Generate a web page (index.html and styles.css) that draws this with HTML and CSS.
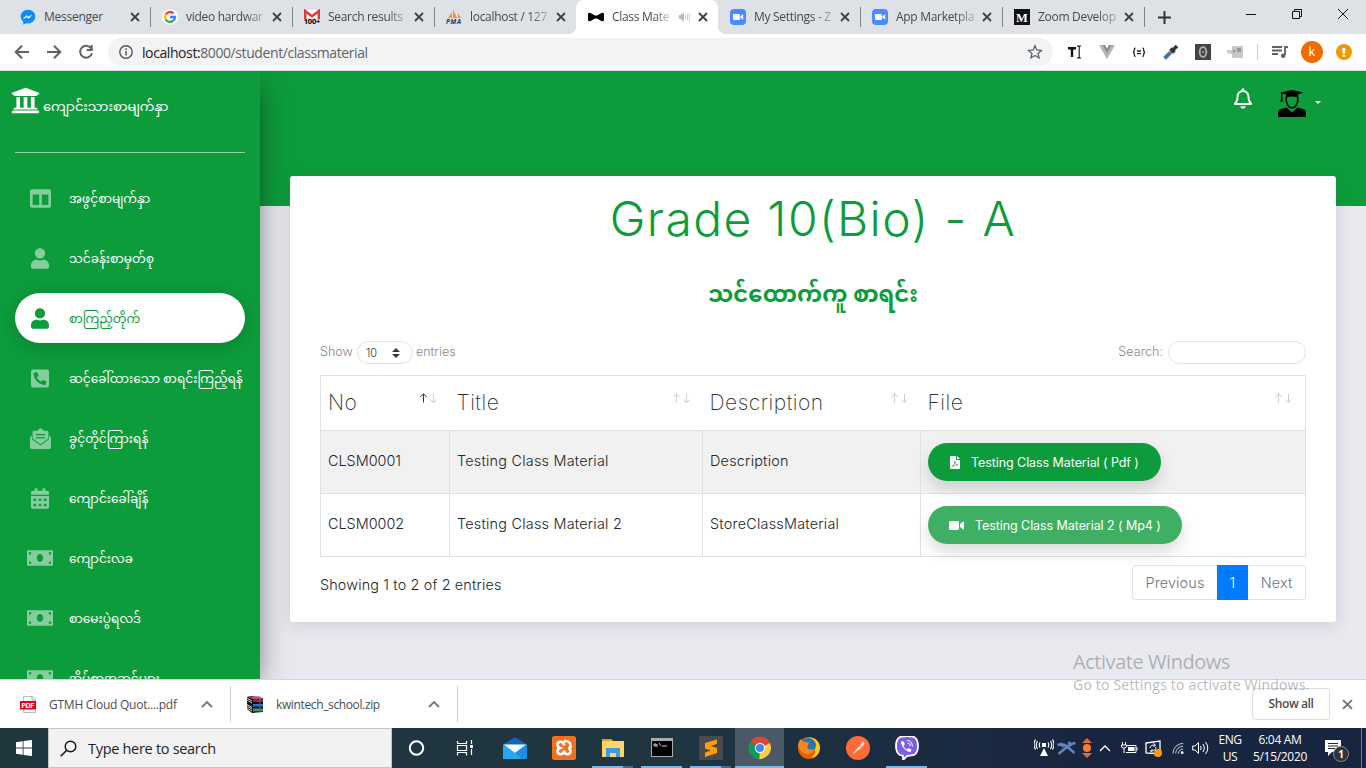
FILE: index.html
```html
<!DOCTYPE html>
<html lang="my">
<head>
<meta charset="utf-8">
<title>Class Material</title>
<link rel="stylesheet" href="styles.css">
</head>
<body>
<svg class="defs" width="0" height="0">
  <symbol id="close" viewBox="0 0 10 10"><path d="M1 1l8 8M9 1l-8 8" stroke="currentColor" stroke-width="1.8"/></symbol>
  <symbol id="user" viewBox="0 0 448 512"><path d="M224 256c70.7 0 128-57.3 128-128S294.7 0 224 0 96 57.3 96 128s57.3 128 128 128zm89.6 32h-16.7c-22.2 10.2-46.9 16-72.9 16s-50.6-5.8-72.9-16h-16.7C60.2 288 0 348.2 0 422.4V464c0 26.5 21.5 48 48 48h352c26.500 0 48-21.500 48-48v-41.600c0-74.200-60.200-134.400-134.400-134.400z"/></symbol>
  <symbol id="money" viewBox="0 0 640 384"><path fill-rule="evenodd" d="M32 0H608a32 32 0 0 1 32 32V352a32 32 0 0 1-32 32H32a32 32 0 0 1-32-32V32A32 32 0 0 1 32 0ZM320 96c-44 0-80 43-80 96s36 96 80 96 80-43 80-96-36-96-80-96ZM48 48v64c35 0 64-29 64-64ZM592 48h-64c0 35 29 64 64 64ZM48 272v64h64c0-35-29-64-64-64ZM592 336v-64c-35 0-64 29-64 64Z"/></symbol>
  <symbol id="zoomcam" viewBox="0 0 16 16"><rect width="16" height="16" rx="4" fill="#4a8cff"/><path d="M3 5h5.500q1.300 0 1.300 1.300V11H4.300Q3 11 3 9.700zM10.400 7.200l2.800-2v5.600l-2.800-2z" fill="#fff"/></symbol>
  <symbol id="sort" viewBox="0 0 18 10"><path stroke="currentColor" d="M4 9.500V.8M.8 4L4 .8 7.200 4"/><path stroke="#ccc" d="M14 .8v8.700M10.800 6.500l3.200 3 3.200-3"/></symbol>
  <symbol id="chev" viewBox="0 0 12 8"><path d="M1 7l5-5 5 5" fill="none" stroke="currentColor" stroke-width="1.900"/></symbol>
</svg>

<header class="tabs">
  <div class="tab"><svg class="fav" viewBox="0 0 16 16"><path d="M8 .7C3.700.7.7 3.800.7 7.600c0 2.200 1 4.100 2.600 5.300v2.800l2.500-1.400c4.800 1.200 9.500-2 9.500-6.700C15.300 3.800 12.200.7 8 .7z" fill="#0a8cff"/><path d="M3.500 9.600l3-3.200L8.300 8l3.400-1.900-3.100 3.400L6.800 7.900z" fill="#fff" stroke="#fff" stroke-width=".5"/></svg><span class="label">Messenger</span><svg class="x"><use href="#close"/></svg></div>
  <div class="tab sep"><svg class="fav" viewBox="0 0 16 16"><circle cx="8" cy="8" r="8" fill="#fff"/><g fill="none" stroke-width="2.300"><path d="M3.700 5.500A5 5 0 0 1 11.600 4.500" stroke="#ea4335"/><path d="M3.700 5.500a5 5 0 0 0 0 5" stroke="#fbbc05"/><path d="M3.700 10.500a5 5 0 0 0 7.600 1.200" stroke="#34a853"/><path d="M11.300 11.700A5 5 0 0 0 13 8H8" stroke="#4285f4"/></g></svg><span class="label fade">video hardwar</span><svg class="x"><use href="#close"/></svg></div>
  <div class="tab sep"><svg class="fav" viewBox="0 0 16 16"><path d="M0 1h16v8H0z" fill="#fff"/><path d="M1.200 10V2L8 7.200 14.800 2v8" fill="none" stroke="#dc3b35" stroke-width="2.400"/><text x="-.2" y="15" font-size="7.500" font-weight="bold" textLength="16.500">100+</text></svg><span class="label fade">Search results</span><svg class="x"><use href="#close"/></svg></div>
  <div class="tab sep"><svg class="fav" viewBox="0 0 16 16"><path d="M2 9L6 3v6zM7 9V0l4 9zM12 9V4l3 5z" fill="#f7941e"/><text x="0" y="15" font-size="6.500" font-style="italic" font-weight="bold" fill="#303070" textLength="15">PMA</text></svg><span class="label fade">localhost / 127</span><svg class="x"><use href="#close"/></svg></div>
  <div class="tab active"><svg class="fav" viewBox="0 0 16 16"><path d="M0 4.500q1-1 2.500-.5L7 6.500h2L13.500 4Q15 3.500 16 4.500v7q-1 1-2.500.5L9 9.500H7L2.500 12Q1 12.500 0 11.500z"/></svg><span class="label fade">Class Mate</span><svg class="snd" viewBox="0 0 12 12"><path d="M1 4h2l3-3v10L3 8H1z" fill="#bbb"/><path d="M7.500 4v4M9.500 3v6M11.300 2v8" stroke="#ccc"/></svg><svg class="x"><use href="#close"/></svg></div>
  <div class="tab"><svg class="fav"><use href="#zoomcam"/></svg><span class="label fade">My Settings - Z</span><svg class="x"><use href="#close"/></svg></div>
  <div class="tab sep"><svg class="fav"><use href="#zoomcam"/></svg><span class="label fade">App Marketpla</span><svg class="x"><use href="#close"/></svg></div>
  <div class="tab sep"><svg class="fav" viewBox="0 0 16 16"><path d="M0 0h16v16H0z" fill="#111"/><text x="2" y="12.500" font-size="12.500" font-weight="bold" font-family="Liberation Serif" fill="#fff">M</text></svg><span class="label fade">Zoom Develop</span><svg class="x"><use href="#close"/></svg></div>
  <div class="newtab sep"><svg width="13" height="13" viewBox="0 0 13 13"><path d="M6.500 0v13M0 6.500h13" stroke="#333" stroke-width="2"/></svg></div>
  <div class="winbtns">
    <svg width="12" height="12" viewBox="0 0 12 12"><path d="M1 6.500h10"/></svg>
    <svg width="12" height="12" viewBox="0 0 12 12"><path d="M1.500 3.500h7v7h-7zM3.500 3.500v-2h7v7h-2"/></svg>
    <svg width="12" height="12" viewBox="0 0 12 12"><path d="M1 1l10 10M11 1L1 11"/></svg>
  </div>
</header>

<nav class="toolbar">
  <svg class="nav" viewBox="0 0 16 16"><path d="M15 8H2M8 1.700L1.700 8 8 14.300"/></svg>
  <svg class="nav" viewBox="0 0 16 16"><path d="M1 8h13M8 1.700L14.300 8 8 14.300"/></svg>
  <svg class="nav" viewBox="0 0 16 16"><path d="M13.200 4.400A6 6 0 1 0 14 9.200M13.700 1v5H8.700"/></svg>
  <div class="omnibox">
    <svg width="14" height="14" viewBox="0 0 14 14"><circle cx="7" cy="7" r="6.200" fill="none" stroke="#555" stroke-width="1.400"/><path d="M7 6v4.500M7 3.300v1.600" stroke="#555" stroke-width="1.500"/></svg>
    <span class="url"><b>localhost:</b>8000/student/classmaterial</span>
    <svg class="star" width="16" height="16" viewBox="0 0 16 16"><path d="M8 1.700l1.800 4.300 4.700.4-3.500 3 1.100 4.600L8 11.500 3.900 14 5 9.400l-3.500-3L6.200 6z" fill="none" stroke="#5f6368" stroke-width="1.300"/></svg>
  </div>
  <div class="exts">
    <svg viewBox="0 0 16 16"><path d="M1 4.200h8M5 4v9" stroke="#111" stroke-width="2.400"/><path d="M10 2h1.500l.7.700.7-.7H14M12.200 3v10M10 14h1.500l.7-.7.700.7H14" stroke="#111" fill="none" stroke-width="1.100"/></svg>
    <svg viewBox="0 0 16 16"><path d="M0 1h5l3 5 3-5h5L8 15z" fill="#b4b4b4"/><path d="M3.500 1H6l2 3.500L10 1h2.500L8 9z" fill="#888"/></svg>
    <svg viewBox="0 0 16 16"><path d="M4.500 4Q3.300 4 3.300 6T2 8.300Q3.300 8.500 3.300 10.500T4.500 12.500M11.500 4q1.200 0 1.200 2t1.300 2.300q-1.300.2-1.300 2.200t-1.200 2M6 7h4M6 9.700h4" fill="none" stroke="#222" stroke-width="1.300"/></svg>
    <svg viewBox="0 0 16 16"><path d="M1.500 14.500L9 7" stroke="#888" stroke-width="4"/><path d="M2 14l5-5" stroke="#3469e0" stroke-width="2.500"/><path d="M7.500 4.500l4 4M9.500 6.500l4.500-4.500" stroke="#333" stroke-width="3.500"/></svg>
    <svg viewBox="0 0 16 16"><path d="M0 0h16v16H0z" fill="#444"/><ellipse cx="8" cy="8" rx="3.300" ry="5" fill="none" stroke="#aaa" stroke-width="2"/><circle cx="8" cy="8" r="1" fill="#aaa"/></svg>
    <svg viewBox="0 0 16 16"><path d="M5 2h11v12H5v-4L0 9V6h5z" fill="#c8c8c8"/><path d="M6 5l3 2-3 2zM10 4h4v4h-4z" fill="#999"/></svg>
    <i class="bar"></i>
    <svg class="queue" viewBox="0 0 16 16"><path d="M0 3h10M0 6.500h10M0 10h6M16 3h-3v8" fill="none" stroke="#5f6368" stroke-width="1.800"/><circle cx="11.200" cy="11.700" r="2.300" fill="#5f6368"/></svg>
    <span class="avatar">k</span>
    <span class="alert">!</span>
  </div>
</nav>

<main class="page">
  <aside class="sidebar">
    <div class="brand"><svg viewBox="0 0 512 512"><path d="M496 128v16a8 8 0 0 1-8 8h-24v12c0 6.600-5.400 12-12 12H60c-6.600 0-12-5.400-12-12v-12H24a8 8 0 0 1-8-8v-16a8 8 0 0 1 4.900-7.400l232-88a8 8 0 0 1 6.100 0l232 88A8 8 0 0 1 496 128zm-24 304H40c-13.300 0-24 10.700-24 24v16a8 8 0 0 0 8 8h464a8 8 0 0 0 8-8v-16c0-13.300-10.700-24-24-24zM96 192v192H60c-6.600 0-12 5.400-12 12v20h416v-20c0-6.600-5.400-12-12-12h-36V192h-64v192h-64V192h-64v192h-64V192H96z"/></svg><span>ကျောင်းသားစာမျက်နှာ</span></div>
    <hr>
    <a class="item"><span class="ico"><svg width="21" height="21" viewBox="0 0 512 512"><path d="M464 32H48C21.500 32 0 53.500 0 80v352c0 26.500 21.500 48 48 48h416c26.500 0 48-21.500 48-48V80c0-26.500-21.500-48-48-48zM224 416H64V160h160v256zm224 0H288V160h160v256z"/></svg></span><span>အဖွင့်စာမျက်နှာ</span></a>
    <a class="item"><span class="ico"><svg width="18" height="21"><use href="#user"/></svg></span><span>သင်ခန်းစာမှတ်စု</span></a>
    <a class="item current"><span class="ico"><svg width="18" height="21"><use href="#user"/></svg></span><span>စာကြည့်တိုက်</span></a>
    <a class="item"><span class="ico"><svg width="18" height="21" viewBox="0 0 448 512"><path d="M400 32H48A48 48 0 0 0 0 80v352a48 48 0 0 0 48 48h352a48 48 0 0 0 48-48V80a48 48 0 0 0-48-48zm-16.390 307.370l-15 65A15 15 0 0 1 354 416C194 416 64 286.290 64 126a15.700 15.700 0 0 1 11.630-14.610l65-15A18.230 18.230 0 0 1 144 96a16.270 16.270 0 0 1 13.790 9.090l30 70A17.900 17.900 0 0 1 189 181a17 17 0 0 1-5.500 11.610l-37.890 31a231.910 231.910 0 0 0 110.780 110.780l31-37.890A17 17 0 0 1 299 291a17.850 17.850 0 0 1 5.910 1.210l70 30A16.250 16.250 0 0 1 384 336a17.410 17.410 0 0 1-.390 3.370z"/></svg></span><span>ဆင့်ခေါ်ထားသော စာရင်းကြည့်ရန်</span></a>
    <a class="item"><span class="ico"><svg width="21" height="21" viewBox="0 0 512 512"><path fill-rule="evenodd" d="M64 257V96a32 32 0 0 1 32-32h77l50-42q33-34 66 0l50 42h77a32 32 0 0 1 32 32v161L256 396ZM144 144v32h224v-32ZM144 224v32h224v-32ZM0 464V250q0-28 18-40l30-22v88l208 151 208-151v-88l30 22q18 12 18 40v214a48 48 0 0 1-48 48H48a48 48 0 0 1-48-48Z"/></svg></span><span>ခွင့်တိုင်ကြားရန်</span></a>
    <a class="item"><span class="ico"><svg width="18" height="21" viewBox="0 0 448 512"><path fill-rule="evenodd" d="M0 160v-48a48 48 0 0 1 48-48h48V12q0-12 12-12h40q12 0 12 12v52h128V12q0-12 12-12h40q12 0 12 12v52h48a48 48 0 0 1 48 48v48ZM0 192h448v272a48 48 0 0 1-48 48H48a48 48 0 0 1-48-48ZM64 256v64h64v-64ZM192 256v64h64v-64ZM320 256v64h64v-64ZM64 384v64h64v-64ZM192 384v64h64v-64ZM320 384v64h64v-64Z"/></svg></span><span>ကျောင်းခေါ်ချိန်</span></a>
    <a class="item"><span class="ico"><svg width="26" height="16"><use href="#money"/></svg></span><span>ကျောင်းလခ</span></a>
    <a class="item"><span class="ico"><svg width="26" height="16"><use href="#money"/></svg></span><span>စာမေးပွဲရလဒ်</span></a>
    <a class="item"><span class="ico"><svg width="26" height="16"><use href="#money"/></svg></span><span>အိမ်စာအဆင့်များ</span></a>
  </aside>
  <section class="content">
    <div class="topnav">
      <svg class="bell" viewBox="0 0 448 512"><path d="M439.390 362.290c-19.320-20.760-55.470-51.990-55.470-154.290 0-77.700-54.480-139.900-127.940-155.160V32c0-17.670-14.320-32-31.980-32s-31.980 14.330-31.980 32v20.840C118.560 68.100 64.080 130.300 64.080 208c0 102.300-36.150 133.530-55.470 154.290-6 6.450-8.660 14.160-8.610 21.710.110 16.400 12.980 32 32.100 32h383.800c19.120 0 32-15.600 32.100-32 .050-7.550-2.610-15.270-8.610-21.710zM67.530 368c21.220-27.970 44.420-74.330 44.530-159.420 0-.2-.060-.380-.060-.580 0-61.860 50.140-112 112-112s112 50.140 112 112c0 .2-.060.380-.060.580.110 85.100 23.310 131.460 44.530 159.420H67.530zM224 512c35.320 0 63.970-28.650 63.970-64H160.030c0 35.350 28.650 64 63.970 64z"/></svg>
      <svg class="student" viewBox="0 0 28 27"><path d="M2.500 2.500L14 0l11.500 2.500L20 4.500v3q-6-2-12 0v-3L4.500 3.600V9l.5 2.500H2L3 9V3z"/><path d="M8.300 6.500v5q1.700 6.500 5.700 6.500t5.700-6.500v-5" fill="none" stroke="#000" stroke-width="1.500"/><path d="M0 27v-4.500q0-3 3-3.500l5.500-1.500L14 22.500l5.500-5L25 19q3 .5 3 3.500V27z"/></svg>
      <i class="caret"></i>
    </div>
    <div class="card">
      <h1>Grade 10(Bio) - A</h1>
      <h2>သင်ထောက်ကူ စာရင်း</h2>
      <div class="controls">
        <span class="show">Show</span><span class="select">10<svg width="8" height="10" viewBox="0 0 8 10"><path d="M0 4l4-4 4 4zM0 6h8l-4 4z" fill="#343a40"/></svg></span><span class="entries">entries</span>
        <span class="search">Search:</span><input type="text" aria-label="Search">
      </div>
      <table>
        <colgroup><col class="c1"><col class="c2"><col class="c3"><col></colgroup>
        <thead><tr>
          <th><div><span>No</span><svg class="sort asc"><use href="#sort"/></svg></div></th>
          <th><div><span>Title</span><svg class="sort"><use href="#sort"/></svg></div></th>
          <th><div><span>Description</span><svg class="sort"><use href="#sort"/></svg></div></th>
          <th><div><span>File</span><svg class="sort"><use href="#sort"/></svg></div></th>
        </tr></thead>
        <tbody>
          <tr><td class="code">CLSM0001</td><td>Testing Class Material</td><td>Description</td><td class="file"><a class="btn pdf"><svg width="10" height="13" viewBox="0 0 10 13"><path d="M1 0h5v4h4v8q0 1-1 1H1q-1 0-1-1V1q0-1 1-1zM7 0l3 3H7z" fill="#fff"/><path d="M2 10.500q3-2 2.700-5.500Q5 8.500 8 9q-3-.4-6 1.500z" fill="none" stroke="#0d9c3b" stroke-width=".6"/></svg><span>Testing Class Material ( Pdf )</span></a></td></tr>
          <tr><td class="code">CLSM0002</td><td>Testing Class Material 2</td><td>StoreClassMaterial</td><td class="file"><a class="btn mp4"><svg width="15" height="11" viewBox="0 0 15 11"><path d="M1.500 1h7Q10 1 10 2.500v6Q10 10 8.500 10h-7Q0 10 0 8.500v-6Q0 1 1.500 1zM11 4l3-2.300q1-.4 1 .5v6.600q0 .9-1 .5L11 7z" fill="#fff"/></svg><span>Testing Class Material 2 ( Mp4 )</span></a></td></tr>
        </tbody>
      </table>
      <div class="foot">
        <span class="info">Showing 1 to 2 of 2 entries</span>
        <div class="pager"><a class="prev">Previous</a><a class="on">1</a><a class="next">Next</a></div>
      </div>
    </div>
  </section>
</main>

<section class="downloads">
  <div class="dl"><svg width="18" height="17" viewBox="0 0 18 17"><path d="M3.500.5h9l3 3v13h-12z" fill="#fff" stroke="#bbb"/><path d="M12 .5V4h4" fill="none" stroke="#aaa"/><rect y="5" width="16" height="8.500" fill="#e2001a"/><text x="1.300" y="12" font-size="7.500" font-weight="bold" fill="#fff" textLength="13">PDF</text></svg><span>GTMH Cloud Quot....pdf</span><svg class="up"><use href="#chev"/></svg></div>
  <div class="dl"><svg width="18" height="17" viewBox="0 0 18 17"><path d="M0 1l4-1 12 2v14l-11 1-5-4z" fill="#111"/><path d="M1 .8l11-.5 4 2.700-10 .3z" fill="#c04a90"/><path d="M6 3.500h10v2.300H6z" fill="#9a2468"/><path d="M6 8h10v2.500H6z" fill="#2c6ed4"/><path d="M6 12.500h10v2.800H6z" fill="#2ba375"/><path d="M0 4l5 3M0 8.500l5 3M0 12l5 3M0 2l5 3M0 10l5 3" stroke="#fff" stroke-width=".8"/><path d="M12 2h2v14h-2z" fill="#8b721d" opacity=".4"/></svg><span class="zip">kwintech_school.zip</span><svg class="up"><use href="#chev"/></svg></div>
  <div class="dlright"><span class="showall">Show all</span><svg class="x big"><use href="#close"/></svg></div>
</section>

<footer class="taskbar">
  <div class="start"><svg width="16" height="16" viewBox="0 0 16 16"><path d="M0 2.200L6.700 1.200v6.400H0zM7.500 1.100L16 0v7.600H7.500zM0 8.400h6.700v6.400L0 13.800zM7.500 8.400H16V16l-8.500-1.100z" fill="#fff"/></svg></div>
  <div class="tsearch"><svg width="17" height="17" viewBox="0 0 17 17"><circle cx="10.500" cy="6.500" r="5.300" fill="none" stroke="#111" stroke-width="1.400"/><path d="M6.700 10.300L.7 16.300" stroke="#111" stroke-width="1.500"/></svg><span>Type here to search</span></div>
  <div class="app"><svg viewBox="0 0 24 24"><circle cx="11.500" cy="12" r="6.700" fill="none" stroke="#fff" stroke-width="2"/></svg></div>
  <div class="app"><svg viewBox="0 0 24 24"><path d="M3.500 5v2.500h9V5M3.500 19.500v-3h9v3M3.500 9.500h9v5h-9zM17.500 4v4M17.500 13v6" fill="none" stroke="#fff" stroke-width="1.200"/><path d="M16 9h3v3h-3z" fill="#fff"/></svg></div>
  <div class="app"><svg viewBox="0 0 24 24"><path d="M0 8.500L12 1l12 7.500z" fill="#0f66ba"/><path d="M0 8.500h24V23H0z" fill="#28a8ea"/><path d="M1 8.500h22L12 17z" fill="#f4f8fb"/><path d="M12 17l12-8.500V23H19z" fill="#1e8fe0"/></svg></div>
  <div class="app"><svg viewBox="0 0 24 24"><rect width="24" height="24" rx="2.500" fill="#f27022"/><path d="M12 9.500C12 5 5.500 4.500 5.500 8.500Q5.500 11 8 12 5.500 13 5.500 15.500C5.500 19.500 12 19 12 14.500 12 19 18.500 19.500 18.500 15.500 18.500 13 16 12 18.500 11 18.500 8.500 18.500 4.500 12 5 12 9.500Z" fill="none" stroke="#fff" stroke-width="2.600"/></svg></div>
  <div class="app run tail"><svg viewBox="0 0 24 24"><path d="M1 3h9l2 2h11v16H1z" fill="#ffd667"/><path d="M1 3h9l2 2H1z" fill="#dda01c"/><path d="M5 21v-9h14v9h-4v-4H9v4z" fill="#3c9be5"/></svg></div>
  <div class="app run"><svg viewBox="0 0 24 24"><path d="M1 2h22v19H1z" fill="#aaa"/><path d="M2 5h20v15H2z" fill="#000"/><path d="M4 8h2v2H4zM7 8v3M9 7l2 3M12 10h5" stroke="#ddd" fill="none" stroke-width=".9"/></svg></div>
  <div class="app run tail"><svg viewBox="0 0 24 24"><rect width="24" height="24" rx="2" fill="#4a4a4a"/><path d="M6 7l12-3.500v4.300L12 10l6 2v5l-12 4v-4.500l6-2-6-2z" fill="#ff9c10"/></svg></div>
  <div class="app chrome"><svg viewBox="0 0 24 24"><path d="M12 12L2.200 6.300A11.200 11.200 0 0 1 22 7z" fill="#db4437"/><path d="M12 12l-.7 11.200A11.200 11.200 0 0 1 2.200 6.300z" fill="#0f9d58"/><path d="M12 12L22 7q3 8-3 13-4 3.200-7.700 3.200z" fill="#ffcd40"/><circle cx="12" cy="12" r="5.200" fill="#f1f1f1"/><circle cx="12" cy="12" r="4" fill="#4285f4"/></svg></div>
  <div class="app"><svg viewBox="0 0 24 24"><circle cx="12" cy="12" r="11" fill="#e66000"/><path d="M8 3q5-3 10 0 5 3 5 9-1 8-8 10 5-6 2-12-3-5-9-7z" fill="#ffcb1f"/><circle cx="11.500" cy="9.500" r="7.500" fill="#2c73b6"/><path d="M1 9Q2 4 4 3q1 3 5 3l3 1-2 4q2 4 8 2-3 6-9 5T1 9z" fill="#f2881e"/></svg></div>
  <div class="app"><svg viewBox="0 0 24 24"><circle cx="12" cy="12" r="12" fill="#ff6c37"/><path d="M5 19l8-9 4 1-8 6zM13 10l4-5 2 2-2 4" fill="#fbe1d6" stroke="#e25a2a" stroke-width=".5"/></svg></div>
  <div class="app run viber"><svg viewBox="0 0 24 24"><path d="M5 1q7-2 14 0 4 2 4 9t-4 9l-7 1-4 4v-4l-3-1q-4-2-4-9t4-9z" fill="#7d5fe6" stroke="#fff" stroke-width="1.800"/><path d="M7 5l2.200 1 .5 2.700-1.300 1.100q1 2.600 3.700 3.800L13.600 12l3 1.700-1 2q-1.700.8-5.200-2T6 7q-.3-1.500 1-2z" fill="#fff"/><path d="M12 4.500q5 0 5.500 6M12.500 7q2.500 0 3 3" fill="none" stroke="#fff"/></svg></div>
  <div class="tray">
    <svg class="t1" viewBox="0 0 20 18"><path d="M6 17l4-8 4 8zM8 4h4v4H8z" fill="#fff"/><path d="M6 3.500q-1.500 2.500 0 5M3.500 2q-2.500 4 0 8M1.500.5q-3 5 0 10M14 3.500q1.500 2.500 0 5M16.500 2q2.500 4 0 8M18.500.5q3 5 0 10" fill="none" stroke="#fff" stroke-width="1.200"/></svg>
    <svg class="t2" viewBox="0 0 20 16"><path d="M1 5q6-2 10 2l7 6M19 3l-5 1-12 10M12 2l3 4M4 3l3 4" stroke="#6482bf" stroke-width="2.600" fill="none"/></svg>
    <svg class="t3" viewBox="0 0 10 20"><path d="M0 5l5-5 5 5zM0 15h10l-5 5z" fill="#e96a2c"/><circle cx="5" cy="10" r="4" fill="#f47a35"/></svg>
    <svg class="t4" viewBox="0 0 12 8"><path d="M1 7l5-5 5 5" fill="none" stroke="#fff" stroke-width="1.300"/></svg>
    <svg class="t5" viewBox="0 0 17 12"><path d="M6 3.500h9v7H5M16 5.500v3M1.500 0v3M4.500 0v3M.5 3h5v2q-2.500 2.500-5 0zM3 6v5" fill="none" stroke="#fff" stroke-width="1"/><path d="M7 5h6.500v4H7z" fill="#fff"/></svg>
    <svg class="t6" viewBox="0 0 17 17"><path d="M1 3l14-2v13L1 13z" fill="none" stroke="#fff" stroke-width="1.300"/><path d="M5 8q0-3 5-3M8.500 3.500L10.500 5l-2 2M11 7q0 4-5 4M7.500 9.500L5.500 11l2 1.500" fill="none" stroke="#fff"/><circle cx="13" cy="13" r="4" fill="#ff990f"/></svg>
    <svg class="t7" viewBox="0 0 13 13"><g fill="none" stroke="#ddd" stroke-width="1"><path d="M1 12A11 11 0 0 1 12 1M4 12a8 8 0 0 1 8-8M7 12a5 5 0 0 1 5-5"/></g><circle cx="11" cy="11" r="1.500" fill="#fff"/></svg>
    <svg class="t8" viewBox="0 0 17 14"><path d="M.7 5h2.500L6.500 1.500v11L3.200 9H.7zM8.500 5q1.500 2 0 4M11 3q3 4 0 8M13.500 1q4.500 6 0 12" fill="none" stroke="#fff"/></svg>
    <span class="lang">ENG<br>US</span>
    <span class="clock">6:04 AM<br>5/15/2020</span>
    <span class="notif"><svg width="17" height="16" viewBox="0 0 17 16"><path d="M0 0h16v12H7l-4 4v-4H0z" fill="#fff"/><path d="M3 3.500h10M3 6h10M3 8.500h7" stroke="#1a2941"/></svg><b>1</b></span>
  </div>
</footer>
<div class="watermark"><p>Activate Windows</p><span>Go to Settings to activate Windows.</span></div>
</body>
</html>
```
FILE: styles.css
```css
* { box-sizing: border-box; }
body { margin: 0; width: 1366px; height: 768px; overflow: hidden; display: grid; grid-template-columns: 1366px; grid-template-rows: 34px 37px 608px 49px 40px; font-family: "Open Sans", "Liberation Sans", sans-serif; font-size: 12px; position: relative; }
.defs { position: absolute; }
svg { display: block; flex: none; }

.tabs { background: #dee1e6; display: flex; padding-left: 8px; color: #45494d; }
.tab { width: 142px; flex: none; height: 34px; display: flex; align-items: center; padding: 0 8px 0 12px; position: relative; }
.tab.sep::before, .newtab.sep::before { content: ""; position: absolute; left: 0; top: 7px; width: 1px; height: 20px; background: #808388; }
.fav { width: 16px; height: 16px; margin-right: 8px; }
.label { flex: 1; min-width: 0; white-space: nowrap; letter-spacing: -.25px; line-height: 20px; }
.fade { letter-spacing: -.3px; -webkit-mask-image: linear-gradient(90deg, #000 70%, rgba(0,0,0,.15)); mask-image: linear-gradient(90deg, #000 70%, rgba(0,0,0,.15)); }
.x { width: 10px; height: 10px; margin: 0 2px 0 3px; color: #3c4043; }
.tab.active { background: #fff; border-radius: 8px 8px 0 0; }
.tab.active .x { margin-left: 8px; }
.tab.active::before, .tab.active::after { content: ""; position: absolute; bottom: 0; width: 8px; height: 8px; }
.tab.active::before { left: -8px; background: radial-gradient(circle at 0 0, transparent 8px, #fff 8.5px); }
.tab.active::after { right: -8px; background: radial-gradient(circle at 100% 0, transparent 8px, #fff 8.5px); }
.snd { width: 12px; height: 12px; margin-left: 6px; }
.newtab { width: 44px; display: flex; align-items: center; padding-left: 14px; position: relative; }
.winbtns { margin-left: auto; display: flex; gap: 34px; padding: 8px 17px 0 0; }
.winbtns path { fill: none; stroke: #111; }

.toolbar { background: #fff; border-bottom: 1px solid #dadce0; display: flex; align-items: center; padding-left: 14px; }
.nav { width: 16px; height: 16px; margin-right: 16px; }
.nav path { fill: none; stroke: #5f6368; stroke-width: 2; }
.omnibox { width: 945px; flex: none; height: 28px; border-radius: 14px; background: #f1f3f4; display: flex; align-items: center; padding: 0 10px 0 11px; margin-left: -2px; }
.url { margin-left: 9px; flex: 1; font-size: 14px; color: #5f6368; letter-spacing: -.41px; }
.url b { font-weight: 400; color: #202124; }
.exts { display: flex; align-items: center; margin-left: 14px; }
.exts svg { width: 16px; height: 16px; margin-right: 16px; }
.exts .bar { width: 1px; height: 16px; background: #ccc; margin: 0 14px 0 -2px; }
.exts .queue { margin-right: 13px; }
.avatar { width: 22px; height: 22px; border-radius: 50%; background: #ef6c00; color: #fff; text-align: center; line-height: 20px; font-size: 13px; margin-right: 13px; }
.alert { width: 16px; height: 16px; border-radius: 50%; background: #f29900; color: #fff; text-align: center; line-height: 16px; font-weight: 800; font-size: 13px; }

.page { display: flex; overflow: hidden; background: linear-gradient(#0d9c3b 135px, #e9eaef 135px); }
.sidebar { width: 260px; flex: none; background: #0d9c3b; box-shadow: 0 10px 30px -5px rgba(0,0,0,.6); padding: 0 15px; color: #fff; font-family: "Noto Sans Myanmar", "Padauk", "Myanmar Text", "Noto Sans", sans-serif; font-size: 12.2px; }
.brand { height: 81px; display: flex; align-items: flex-start; margin-left: -4px; }
.brand svg { width: 29px; height: 29px; fill: #fff; margin: 15px 3px 0 0; }
.brand span { line-height: 26px; margin-top: 24px; font-size: 13px; white-space: nowrap; }
.sidebar hr { height: 1px; border: 0; background: rgba(255,255,255,.55); margin: 0 0 20px; }
.item { height: 50px; margin-bottom: 10px; border-radius: 25px; display: flex; align-items: center; white-space: nowrap; }
.ico { width: 54px; flex: none; display: flex; justify-content: center; padding-right: 4px; }
.ico svg { fill: #fff; opacity: .5; }
.item .ico + span { line-height: 24px; padding-top: 4px; }
.current { background: #fff; color: #0d9c3b; box-shadow: 0 4px 20px rgba(0,0,0,.18); }
.current .ico svg { fill: #0d9c3b; opacity: 1; }

.content { flex: 1; min-width: 0; padding: 0 30px; font-family: Inter, sans-serif; }
.topnav { height: 105px; display: flex; justify-content: flex-end; padding-right: 15px; }
.bell { width: 18px; height: 21px; fill: #fff; margin: 17px 26px 0 0; }
.student { width: 28px; height: 27px; margin: 19px 9px 0 0; }
.caret { margin-top: 30px; border: 3px solid transparent; border-top-color: #fff; height: 3px; }
.card { height: 446px; background: #fff; border-radius: 3px; padding: 0 30px; box-shadow: 0 3px 18px rgba(60,65,90,.16); color: #212529; }
h1 { margin: 0; height: 86px; line-height: 86px; text-align: center; font-size: 48px; font-weight: 300; color: #0d9c3b; white-space: nowrap; letter-spacing: 1.4px; }
h2 { margin: 0; height: 76px; padding-top: 3px; text-align: center; font: 700 22.7px/64px "Noto Sans Myanmar", "Padauk", "Noto Sans", sans-serif; color: #0d9c3b; }
.controls { height: 37px; display: flex; align-items: flex-start; font-size: 12.6px; font-weight: 300; color: #888; padding-top: 3px; line-height: 22px; }
.select { width: 56px; height: 23px; margin: 0 3px 0 4px; border: 1px solid #dee2e6; border-radius: 12px; display: flex; align-items: center; justify-content: space-between; padding: 0 12px 0 8px; color: #333; font-size: 11px; }
.search { margin-left: auto; }
.controls input { width: 138px; height: 23px; border: 1px solid #dee2e6; border-radius: 12px; margin: 0 0 0 5px; padding: 0 8px; outline: 0; }
table { width: 986px; table-layout: fixed; border-collapse: collapse; border: 1px solid #dee2e6; font-size: 14.4px; font-weight: 300; }
.c1 { width: 129px; } .c2 { width: 253px; } .c3 { width: 218px; }
th { height: 55px; padding: 0 12px 2px 7px; text-align: left; font-weight: 200; font-size: 21px; letter-spacing: .5px; color: #333; }
th div { display: flex; justify-content: space-between; }
.sort { width: 19px; height: 10px; margin-top: 3px; fill: none; color: #ccc; }
.sort.asc { color: #333; }
td { height: 63px; padding: 0 7px 3px; border: 1px solid #dee2e6; white-space: nowrap; letter-spacing: .23px; }
td.code { letter-spacing: 0; }
td.file { padding: 0 7px; letter-spacing: -.07px; }
tbody tr:first-child { background: #f1f1f1; }
.btn { display: inline-flex; align-items: center; height: 38px; border-radius: 20px; color: #fff; font-size: 12.5px; font-weight: 400; box-shadow: 0 8px 16px rgba(0,0,0,.14); }
.pdf { width: 233px; background: #0d9c3b; padding-left: 22px; gap: 11px; }
.mp4 { width: 254px; background: #3fb063; padding-left: 21px; gap: 11px; }
.foot { display: flex; justify-content: space-between; padding-top: 8px; font-size: 14.4px; font-weight: 300; letter-spacing: .15px; }
.info { line-height: 40px; }
.pager { display: flex; height: 35px; line-height: 33px; color: #6c757d; text-align: center; border: 1px solid #dee2e6; border-radius: 3px; width: 174px; }
.prev { width: 84px; }
.on { background: #007bff; color: #fff; width: 31px; margin: -1px 0; line-height: 35px; }
.next { flex: 1; }

.downloads { background: #fff; border-top: 1px solid #d5d6da; display: flex; color: #4a4d50; }
.dl { width: 227px; margin: 6px 0 6px; display: flex; align-items: center; border-right: 1px solid #ccc; padding: 0 17px 0 16px; }
.dl:first-child { width: 231px; padding-left: 20px; }
.dl span { margin-left: 11px; letter-spacing: -.25px; }
.dl .zip { letter-spacing: -.37px; }
.up { width: 12px; height: 8px; margin-left: auto; color: #777; }
.dlright { margin-left: auto; display: flex; align-items: center; padding-right: 11px; }
.showall { width: 78px; height: 32px; border: 1px solid #dadce0; border-radius: 4px; text-align: center; line-height: 30px; font-weight: 600; letter-spacing: -.4px; }
.big { width: 11px; height: 11px; margin-left: 12px; color: #70757a; }

.taskbar { display: flex; background: linear-gradient(90deg, #20373e, #1f3540 50%, #182540 80%, #172541); }
.start { width: 48px; flex: none; display: grid; place-items: center; }
.tsearch { width: 344px; flex: none; background: #f2f2f2; border: 1px solid #c4c4c4; display: flex; align-items: center; padding-left: 11px; gap: 11px; font-size: 14.5px; letter-spacing: -.3px; color: #222; }
.app { width: 49px; flex: none; display: grid; place-items: center; position: relative; }
.app svg { width: 24px; height: 24px; }
.run::after, .chrome::after { content: ""; position: absolute; left: 4px; right: 4px; bottom: 0; height: 2px; background: #76b9ed; }
.tail::after { background: linear-gradient(90deg, #76b9ed 31px, #3f6c8e 31px); }
.chrome { background: #4b5a66; }
.chrome::after { left: 0; right: 0; }
.tray { margin-left: auto; display: flex; align-items: center; color: #fff; line-height: 17px; letter-spacing: -.4px; text-align: center; border-right: 1px solid #778; margin-right: 4px; }
.t1 { width: 20px; height: 18px; } .t2 { width: 21px; height: 16px; margin-left: 2px; } .t3 { width: 10px; height: 20px; margin-left: 5px; } .t4 { width: 12px; height: 8px; margin-left: 7px; } .t5 { width: 17px; height: 12px; margin-left: 10px; } .t6 { width: 17px; height: 17px; margin-left: 7px; } .t7 { width: 12px; height: 13px; margin-left: 10px; } .t8 { width: 17px; height: 14px; margin-left: 8px; }
.lang { width: 38px; margin-left: 2px; }
.clock { width: 62px; letter-spacing: -.3px; }
.notif { width: 50px; height: 17px; padding-left: 14px; position: relative; }
.notif b { position: absolute; left: 22px; top: 6px; width: 16px; height: 16px; border: 1px solid #888; border-radius: 50%; background: #333; font-size: 10px; line-height: 14px; }

.watermark { position: absolute; left: 1073px; top: 650px; color: rgba(125,125,125,.55); line-height: 24px; white-space: nowrap; }
.watermark p { margin: 0; font-size: 20px; letter-spacing: -.45px; }
.watermark span { font-size: 14px; line-height: 21px; display: block; letter-spacing: .2px; }
```
